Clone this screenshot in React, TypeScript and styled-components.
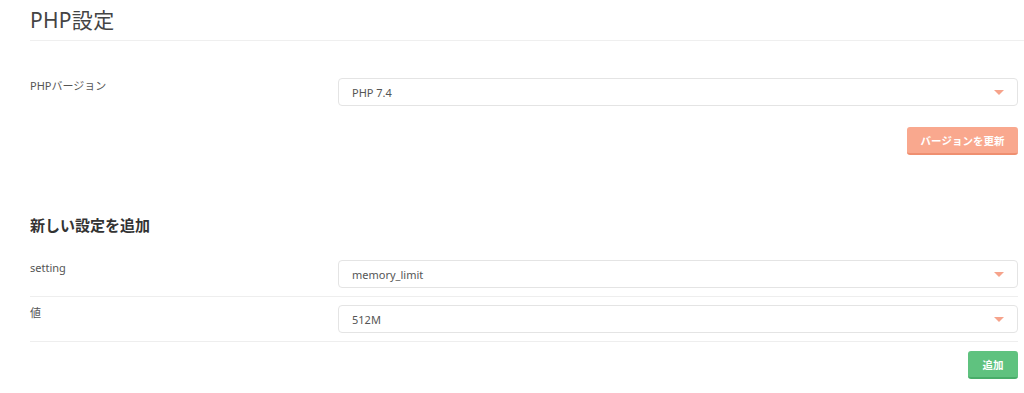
import React from "react";
import styled, { createGlobalStyle } from "styled-components";

const Global = createGlobalStyle`
  html, body { margin: 0; padding: 0; background: #fff; }
  body { font-family: "Noto Sans", "Noto Sans CJK JP", sans-serif; color: #555; }
`;

const Page = styled.div`
  padding: 0 0 0 30px;
  width: 1024px;
  box-sizing: border-box;
`;

const Header = styled.div`
  height: 41px;
  border-bottom: 1px solid #efefef;
  display: flex;
  align-items: center;
  box-sizing: border-box;
`;

const Title = styled.h1`
  margin: 0;
  font-size: 21px;
  font-weight: 400;
  color: #444;
  letter-spacing: 0.3px;
  position: relative;
  top: -1px;
`;

const Body = styled.div`
  padding-right: 6px;
`;

const Section = styled.div<{ $top: number }>`
  padding-top: ${(p) => p.$top}px;
  display: flex;
  flex-direction: column;
`;

const Row = styled.div<{ $divided?: boolean }>`
  display: grid;
  grid-template-columns: 308px 1fr;
  align-items: start;
  padding: ${(p) => (p.$divided ? "8px 0" : "0")};
  border-bottom: ${(p) => (p.$divided ? "1px solid #eeeeee" : "none")};
`;

const Label = styled.div`
  font-size: 11px;
  color: #555;
  line-height: 14px;
  padding-top: 1px;
`;

const Select = styled.div`
  height: 28px;
  box-sizing: border-box;
  border: 1px solid #e4e4e4;
  border-radius: 4px;
  display: flex;
  align-items: center;
  justify-content: space-between;
  padding: 0 13px 0 13px;
  font-size: 11px;
  color: #555;
  background: #fff;
`;

const Arrow = styled.span`
  width: 0;
  height: 0;
  border-left: 5px solid transparent;
  border-right: 5px solid transparent;
  border-top: 5px solid #f6a38b;
`;

const Actions = styled.div<{ $top: number }>`
  display: flex;
  justify-content: flex-end;
  margin-top: ${(p) => p.$top}px;
`;

const Button = styled.button<{ $tone: "orange" | "green"; $w: number }>`
  width: ${(p) => p.$w}px;
  height: 28px;
  border: none;
  border-radius: 3px;
  box-sizing: border-box;
  font-family: inherit;
  font-size: 10.5px;
  font-weight: 700;
  color: #fff;
  padding: 0;
  background: ${(p) => (p.$tone === "orange" ? "#f9a88e" : "#5fc27f")};
  border-bottom: 2px solid ${(p) => (p.$tone === "orange" ? "#ef8f70" : "#48ad69")};
`;

const Subtitle = styled.h2`
  margin: 0 0 17px 0;
  font-size: 15px;
  font-weight: 700;
  color: #333;
  line-height: 20px;
`;

export default function App() {
  return (
    <>
      <Global />
      <Page>
        <Header>
          <Title>PHP設定</Title>
        </Header>
        <Body>
          <Section $top={37}>
            <Row>
              <Label>PHPバージョン</Label>
              <Select>
                <span>PHP 7.4</span>
                <Arrow />
              </Select>
            </Row>
            <Actions $top={21}>
              <Button $tone="orange" $w={111}>バージョンを更新</Button>
            </Actions>
          </Section>
          <Section $top={60}>
            <Subtitle>新しい設定を追加</Subtitle>
            <div>
              <Row $divided>
                <Label>setting</Label>
                <Select>
                  <span>memory_limit</span>
                  <Arrow />
                </Select>
              </Row>
              <Row $divided>
                <Label>値</Label>
                <Select>
                  <span>512M</span>
                  <Arrow />
                </Select>
              </Row>
            </div>
            <Actions $top={9}>
              <Button $tone="green" $w={50}>追加</Button>
            </Actions>
          </Section>
        </Body>
      </Page>
    </>
  );
}
